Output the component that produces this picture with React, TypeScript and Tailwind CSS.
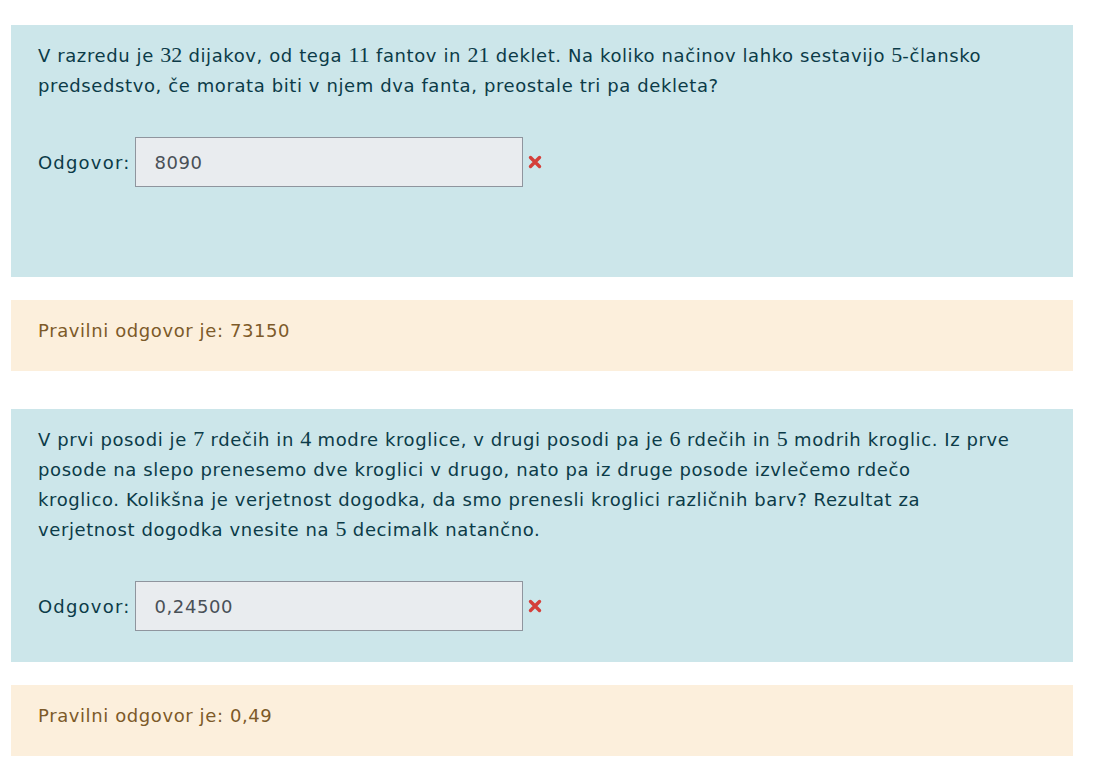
import type { ReactNode } from 'react';

const M = ({ children }: { children: ReactNode }) => (
  <span className="font-['Liberation_Serif',serif] text-[22px] leading-none tracking-normal">{children}</span>
);

const WrongMark = () => (
  <svg viewBox="0 0 16 16" className="ml-[4px] h-[16px] w-[16px]" aria-hidden>
    <path d="M3.5 3.5 L12.5 12.5 M12.5 3.5 L3.5 12.5" stroke="#d43f3a" strokeWidth="3.4" strokeLinecap="round" />
  </svg>
);

type QuestionProps = {
  text: ReactNode;
  answer: string;
  correct: string;
};

const Question = ({ text, answer, correct }: QuestionProps) => (
  <div className="flex flex-col gap-[23px]">
    <div className="min-h-[252px] bg-[#cce6ea] px-[27px] pt-[16px] pb-[31px] text-[#0b3b48]">
      <p className="leading-[30px]">{text}</p>
      <div className="mt-[36px] flex items-center">
        <span className="mr-[5px] tracking-[1.2px]">Odgovor:</span>
        <div className="flex h-[50px] w-[388px] items-center border border-[#8f959e] bg-[#e9ecef] px-[18px] text-[#495057]">
          {answer}
        </div>
        <WrongMark />
      </div>
    </div>
    <div className="bg-[#fcefdc] px-[27px] pt-[16px] pb-[25px] leading-[30px] text-[#7d5a29]">
      Pravilni odgovor je: {correct}
    </div>
  </div>
);

export default function App() {
  return (
    <div className="min-h-screen w-[1097px] bg-white px-[11px] pt-[25px] font-['DejaVu_Sans',sans-serif] text-[18px] tracking-[0.6px]">
      <div className="flex w-[1062px] flex-col gap-[38px]">
        <Question
          text={
            <>
              V razredu je <M>32</M> dijakov, od tega <M>11</M> fantov in <M>21</M> deklet. Na koliko načinov lahko
              sestavijo <M>5</M>-člansko
              <br />
              predsedstvo, če morata biti v njem dva fanta, preostale tri pa dekleta?
            </>
          }
          answer="8090"
          correct="73150"
        />
        <Question
          text={
            <>
              V prvi posodi je <M>7</M> rdečih in <M>4</M> modre kroglice, v drugi posodi pa je <M>6</M> rdečih in{' '}
              <M>5</M> modrih kroglic. Iz prve
              <br />
              posode na slepo prenesemo dve kroglici v drugo, nato pa iz druge posode izvlečemo rdečo
              <br />
              kroglico. Kolikšna je verjetnost dogodka, da smo prenesli kroglici različnih barv? Rezultat za
              <br />
              verjetnost dogodka vnesite na <M>5</M> decimalk natančno.
            </>
          }
          answer="0,24500"
          correct="0,49"
        />
      </div>
    </div>
  );
}
